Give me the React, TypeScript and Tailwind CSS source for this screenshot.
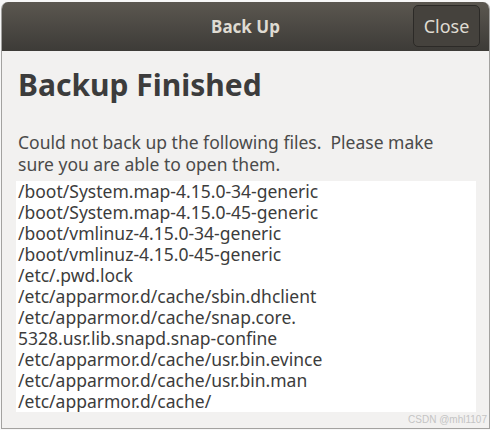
const FILES = [
  "/boot/System.map-4.15.0-34-generic",
  "/boot/System.map-4.15.0-45-generic",
  "/boot/vmlinuz-4.15.0-34-generic",
  "/boot/vmlinuz-4.15.0-45-generic",
  "/etc/.pwd.lock",
  "/etc/apparmor.d/cache/sbin.dhclient",
  "/etc/apparmor.d/cache/snap.core.",
  "5328.usr.lib.snapd.snap-confine",
  "/etc/apparmor.d/cache/usr.bin.evince",
  "/etc/apparmor.d/cache/usr.bin.man",
  "/etc/apparmor.d/cache/",
  "usr.sbin.cups-browsed",
];

export default function App() {
  return (
    <div className="relative h-[430px] w-[490px] overflow-hidden bg-[#f7f7f7] font-['Noto_Sans',sans-serif]">
      <div className="ml-[1px] mt-[2px] flex h-[427px] w-[489px] flex-col overflow-hidden rounded-t-[7px] border-x border-b border-[#a3a2a0] bg-[#f2f1f0]">
        {/* header bar */}
        <div className="relative flex h-[49px] shrink-0 items-center justify-center bg-gradient-to-b from-[#5b5750] to-[#3d3b37]">
          <span className="text-[17px] font-bold text-[#dfdbd2]">Back Up</span>
          <button className="absolute right-[9px] top-[3px] flex h-[42px] w-[67px] items-center justify-center rounded-[5px] border border-[#2c2a27] bg-[#45423d] text-[18px] text-[#dfdbd2]">
            Close
          </button>
        </div>

        <div className="flex min-h-0 flex-1 flex-col pl-[16px] pr-[13px]">
          <h1 className="mt-[15px] text-[30px] font-bold leading-[38px] text-[#3c3c3c]">Backup Finished</h1>
          <p className="mt-[27px] text-[17.5px] leading-[22px] text-[#4a4a4a]">
            Could not back up the following files.&nbsp; Please make
            <br />
            sure you are able to open them.
          </p>
          <div className="mt-[6px] h-[231px] w-[460px] -ml-[2px] overflow-hidden bg-white pl-[2px] text-[17.5px] leading-[21px] text-[#3c3c3c]">
            {FILES.map((f, i) => (
              <div key={i} className="whitespace-nowrap">
                {f}
              </div>
            ))}
          </div>
        </div>
      </div>
      <span className="absolute right-[3px] top-[412px] text-[10px] text-[#c4c4c4] font-['Liberation_Sans',sans-serif]">CSDN @mhl1107</span>
    </div>
  );
}
